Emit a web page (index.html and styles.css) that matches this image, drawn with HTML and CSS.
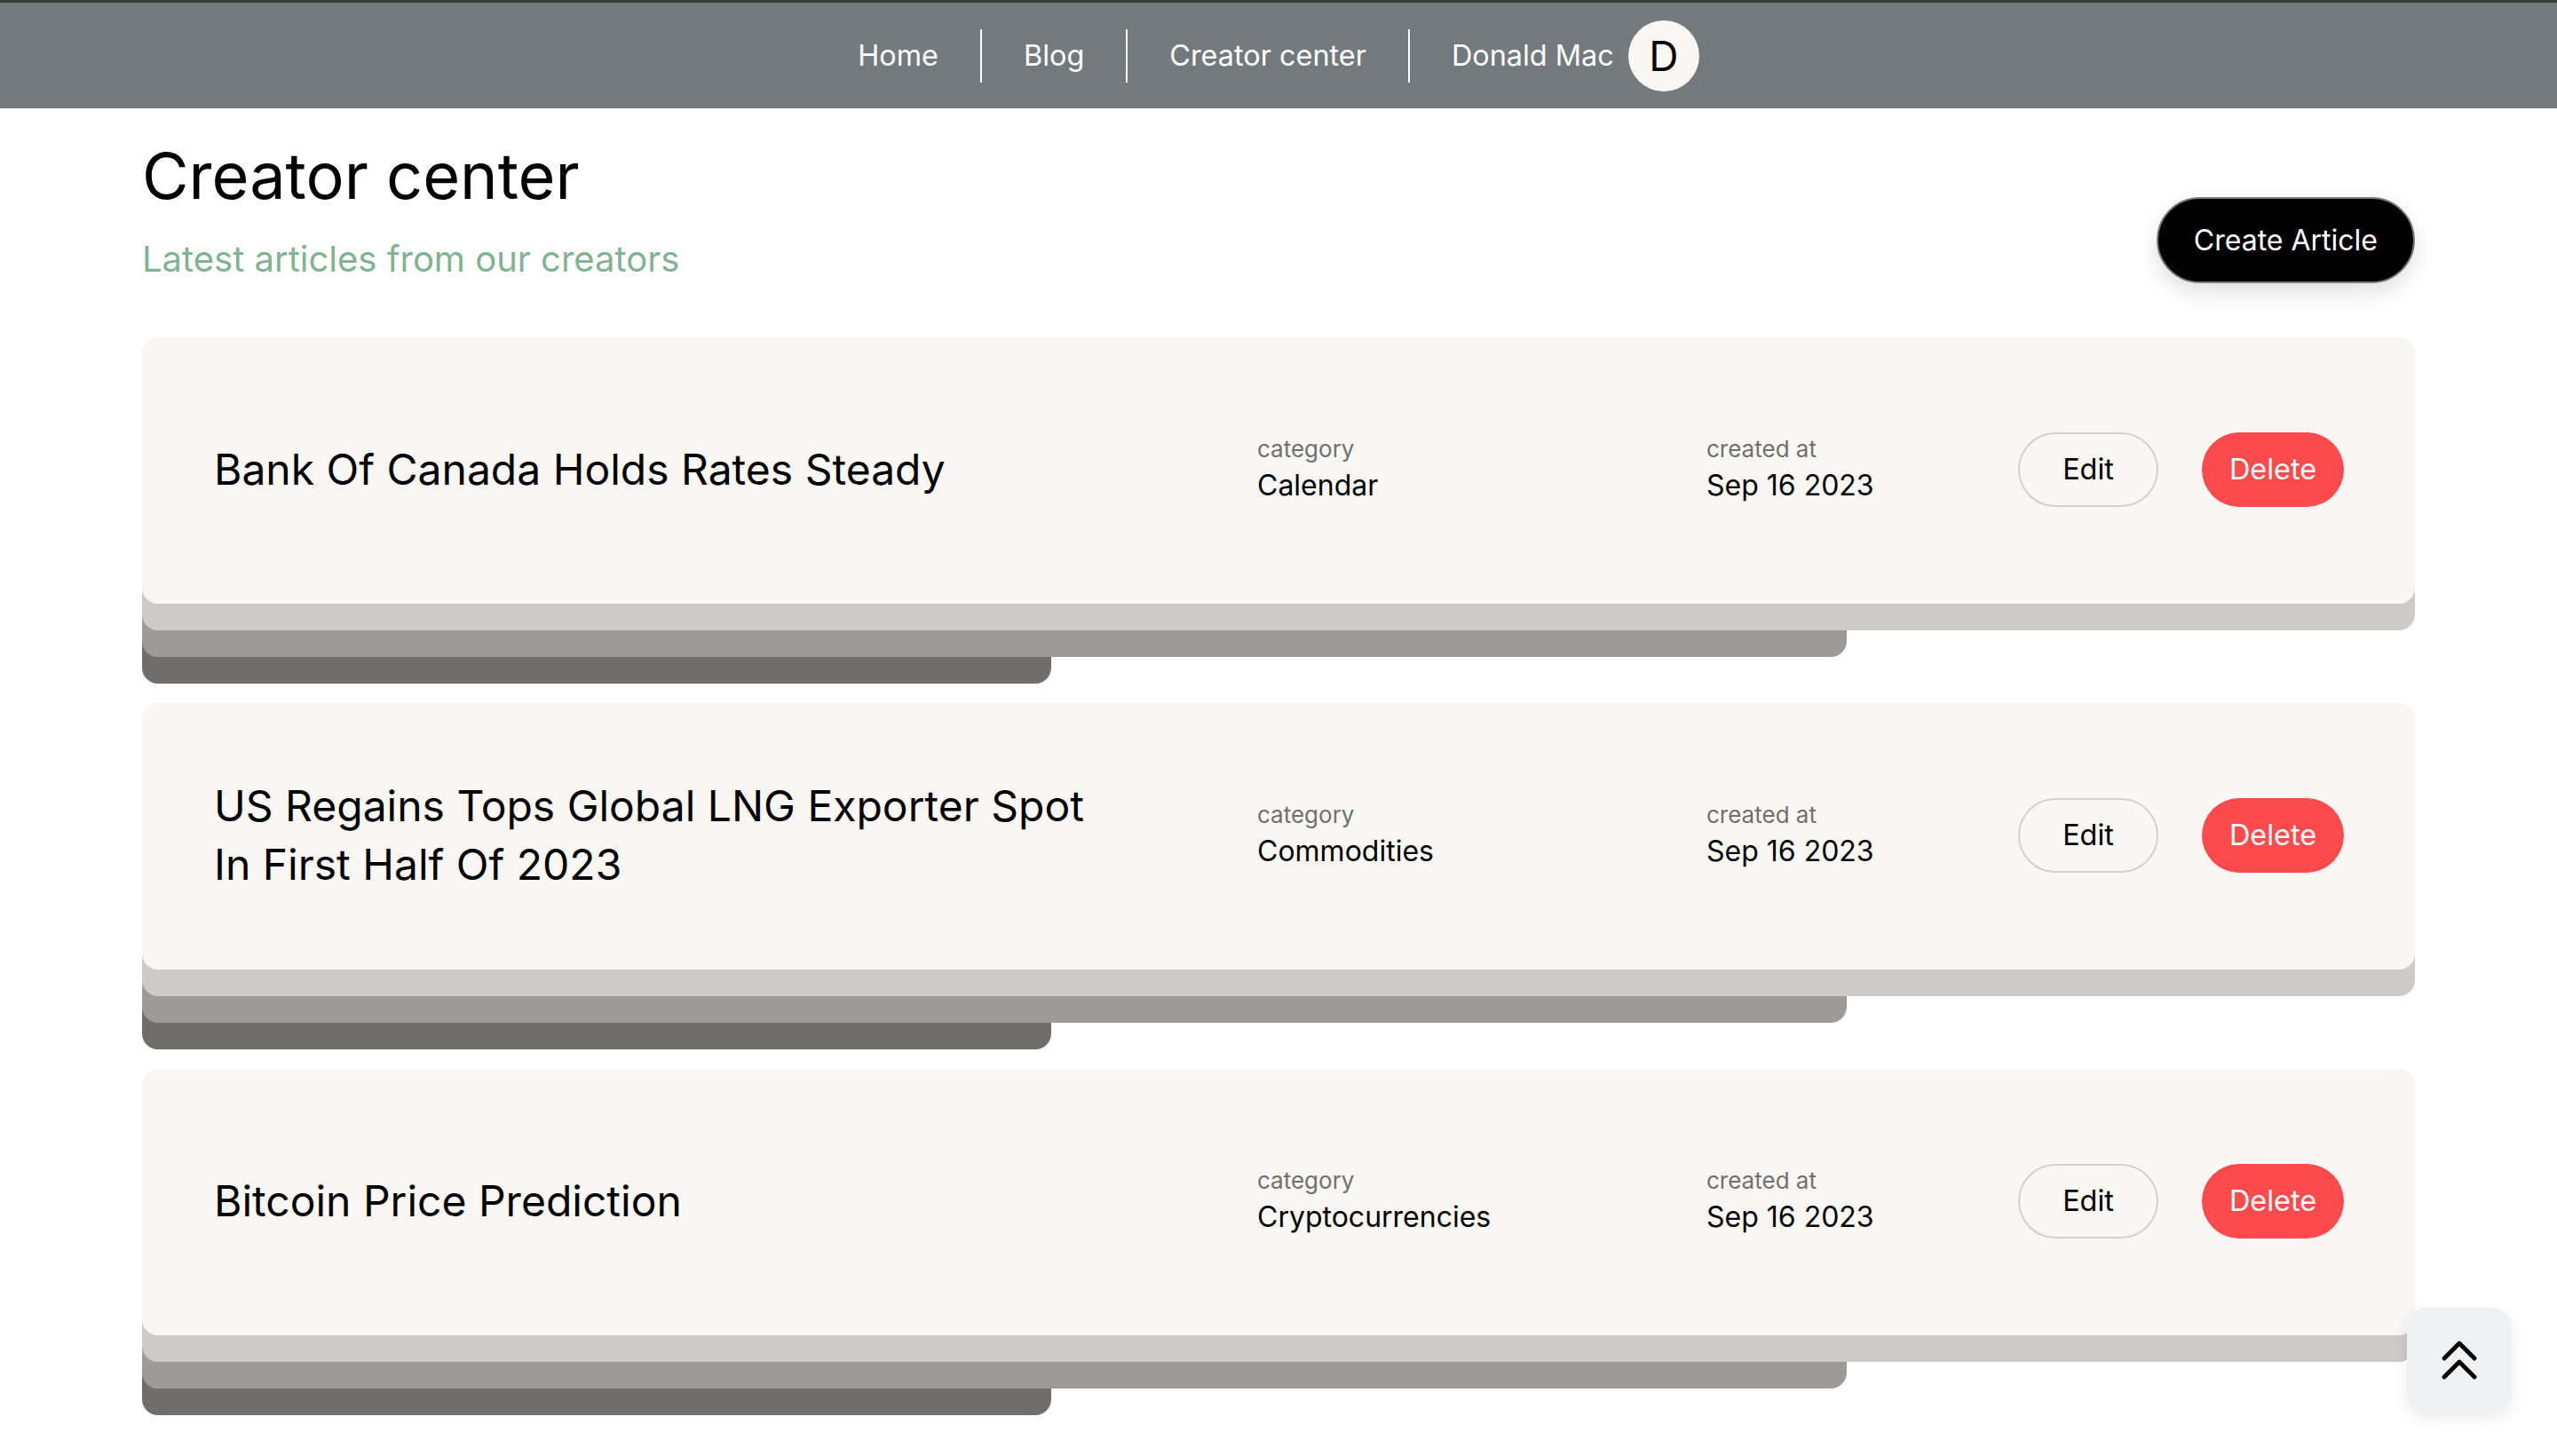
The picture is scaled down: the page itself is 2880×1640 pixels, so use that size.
FILE: index.html
```html
<!DOCTYPE html>
<html lang="en">
<head>
<meta charset="utf-8">
<title>Creator center</title>
<link rel="stylesheet" href="styles.css">
</head>
<body>
<header class="topbar">
  <nav class="menu">
    <a class="menu-item" href="#">Home</a>
    <a class="menu-item" href="#">Blog</a>
    <a class="menu-item" href="#">Creator center</a>
    <div class="menu-item user">
      <span class="user-name">Donald Mac</span>
      <span class="avatar">D</span>
    </div>
  </nav>
</header>

<main class="page">
  <div class="page-head">
    <div class="titles">
      <h1 class="page-title">Creator center</h1>
      <p class="page-sub">Latest articles from our creators</p>
    </div>
    <button class="create-btn">Create Article</button>
  </div>

  <section class="articles">
    <article class="article">
      <div class="card">
        <h2 class="card-title">Bank Of Canada Holds Rates Steady</h2>
        <div class="meta">
          <div class="meta-label">category</div>
          <div class="meta-value">Calendar</div>
        </div>
        <div class="meta">
          <div class="meta-label">created at</div>
          <div class="meta-value">Sep 16 2023</div>
        </div>
        <div class="actions">
          <button class="btn btn-edit">Edit</button>
          <button class="btn btn-delete">Delete</button>
        </div>
      </div>
      <div class="layer layer-1"></div>
      <div class="layer layer-2"></div>
      <div class="layer layer-3"></div>
    </article>

    <article class="article">
      <div class="card">
        <h2 class="card-title">US Regains Tops Global LNG Exporter Spot In First Half Of 2023</h2>
        <div class="meta">
          <div class="meta-label">category</div>
          <div class="meta-value">Commodities</div>
        </div>
        <div class="meta">
          <div class="meta-label">created at</div>
          <div class="meta-value">Sep 16 2023</div>
        </div>
        <div class="actions">
          <button class="btn btn-edit">Edit</button>
          <button class="btn btn-delete">Delete</button>
        </div>
      </div>
      <div class="layer layer-1"></div>
      <div class="layer layer-2"></div>
      <div class="layer layer-3"></div>
    </article>

    <article class="article">
      <div class="card">
        <h2 class="card-title">Bitcoin Price Prediction</h2>
        <div class="meta">
          <div class="meta-label">category</div>
          <div class="meta-value">Cryptocurrencies</div>
        </div>
        <div class="meta">
          <div class="meta-label">created at</div>
          <div class="meta-value">Sep 16 2023</div>
        </div>
        <div class="actions">
          <button class="btn btn-edit">Edit</button>
          <button class="btn btn-delete">Delete</button>
        </div>
      </div>
      <div class="layer layer-1"></div>
      <div class="layer layer-2"></div>
      <div class="layer layer-3"></div>
    </article>
  </section>
</main>

<button class="to-top" aria-label="Back to top">
  <svg width="40" height="44" viewBox="0 0 40 44" fill="none" stroke="#000" stroke-width="4.8" stroke-linecap="round" stroke-linejoin="round">
    <path d="M3 20 L20 3 L37 20"/>
    <path d="M3 41 L20 24 L37 41"/>
  </svg>
</button>
</body>
</html>
```

FILE: styles.css
```css
* {
  box-sizing: border-box;
}

body {
  margin: 0;
  background: #ffffff;
  font-family: Inter, "Noto Sans", "Liberation Sans", sans-serif;
  color: #000;
}

/* ---------- top bar ---------- */
.topbar {
  height: 122px;
  background: #737a7d;
  border-top: 3px solid #3b3a3a;
  display: flex;
  justify-content: center;
  align-items: center;
}

.menu {
  display: flex;
  align-items: center;
}

.menu-item {
  display: flex;
  align-items: center;
  height: 60px;
  padding: 0 47px;
  color: #fff;
  font-size: 32.4px;
  text-decoration: none;
}

.menu-item + .menu-item {
  border-left: 2px solid #fff;
}

.menu-item:first-child {
  padding-left: 0;
}

.user {
  padding-right: 0;
  gap: 16px;
}

.avatar {
  width: 80px;
  height: 80px;
  border-radius: 50%;
  background: #f9f7f3;
  color: #000;
  font-size: 46px;
  display: flex;
  align-items: center;
  justify-content: center;
  line-height: 1;
}

/* ---------- page ---------- */
.page {
  padding: 32px 160px 80px;
}

.page-head {
  display: flex;
  justify-content: space-between;
  align-items: flex-end;
}

.page-title {
  margin: 0;
  font-size: 72px;
  font-weight: 400;
  line-height: normal;
}

.page-sub {
  margin: 26px 0 0;
  font-size: 40px;
  color: #82b292;
  line-height: normal;
}

.create-btn {
  height: 97px;
  padding: 0 40px;
  margin-bottom: -3px;
  border-radius: 999px;
  border: 2px solid #7a7a7a;
  background: #000;
  color: #fff;
  font-family: inherit;
  font-size: 32px;
  box-shadow: 0 10px 24px rgba(0, 0, 0, 0.12);
}

/* ---------- articles ---------- */
.articles {
  margin-top: 64px;
  display: flex;
  flex-direction: column;
  gap: 22px;
}

.article {
  display: flex;
  flex-direction: column;
}

.card {
  position: relative;
  z-index: 4;
  height: 300px;
  padding: 0 80px 3px 81px;
  background: #f9f7f3;
  border-radius: 18px;
  display: grid;
  grid-template-columns: 1fr 506px 351px auto;
  align-items: center;
}

.card-title {
  margin: 0;
  max-width: 1005px;
  font-size: 48px;
  font-weight: 400;
  line-height: 1.36;
}

.meta-label {
  font-size: 26px;
  color: #707070;
  line-height: 1.2;
  margin-bottom: 7px;
}

.meta-value {
  font-size: 32px;
  line-height: 1.2;
}

.actions {
  display: flex;
  gap: 49px;
}

.btn {
  height: 84px;
  border-radius: 999px;
  font-family: inherit;
  font-size: 32.4px;
  display: flex;
  align-items: center;
  justify-content: center;
}

.btn-edit {
  width: 158px;
  border: 2px solid #d2d1cf;
  background: transparent;
  color: #000;
}

.btn-delete {
  width: 160px;
  border: none;
  background: #fd4a4c;
  color: #fff;
}

.layer {
  position: relative;
  height: 48px;
  margin-top: -18px;
  border-radius: 0 0 18px 18px;
}

.layer-1 {
  z-index: 3;
  width: 100%;
  background: #cccbc7;
}

.layer-2 {
  z-index: 2;
  width: 75%;
  background: #9c9b97;
}

.layer-3 {
  z-index: 1;
  width: 40%;
  background: #6f6e6b;
}

/* ---------- back to top ---------- */
.to-top {
  position: fixed;
  right: 51px;
  bottom: 49px;
  width: 118px;
  height: 118px;
  border: none;
  border-radius: 22px;
  background: #f0f1f3;
  box-shadow: 0 6px 18px rgba(0, 0, 0, 0.08);
  display: flex;
  align-items: center;
  justify-content: center;
  padding: 0;
  z-index: 10;
}
```
